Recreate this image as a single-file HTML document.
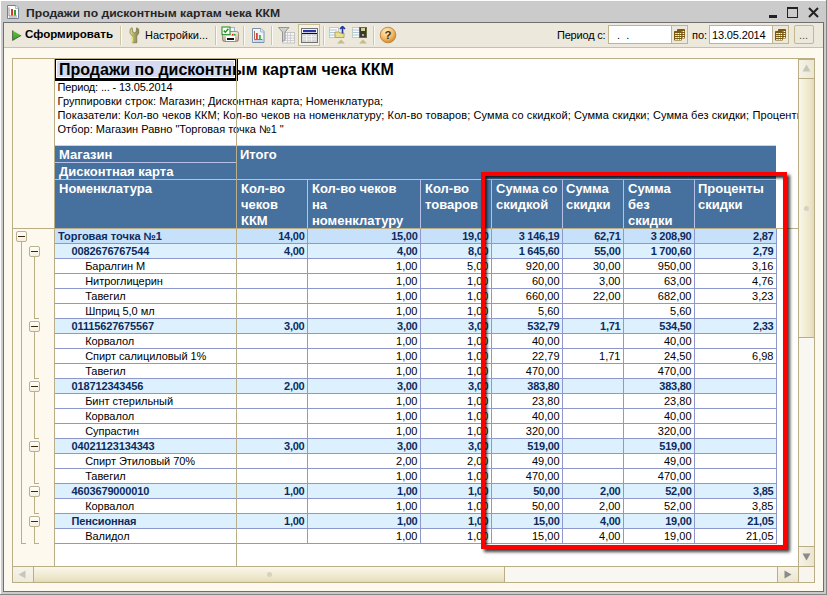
<!DOCTYPE html>
<html><head><meta charset="utf-8">
<style>
*{margin:0;padding:0;box-sizing:border-box}
html,body{width:827px;height:595px;overflow:hidden}
body{position:relative;background:#cbcbcb;font-family:"Liberation Sans",sans-serif;font-size:11px;color:#000}
.a{position:absolute}
.t{position:absolute;white-space:nowrap;line-height:13px}
.r{text-align:right}
.b{font-weight:bold}
</style></head><body>

<div class="a" style="left:0;top:0;width:827px;height:1px;background:#fcfcfc"></div>
<div class="a" style="left:0;top:0;width:1px;height:595px;background:#fcfcfc"></div>
<div class="a" style="left:0;top:594px;width:827px;height:1px;background:#858585"></div>
<div class="a" style="left:826px;top:0;width:1px;height:595px;background:#858585"></div>
<svg class="a" style="left:7px;top:5px" width="12" height="14" viewBox="0 0 12 14">
<path d="M0.5 0.5h8.5l2.5 2.5v10.5h-11z" fill="#fff" stroke="#6e8298"/><path d="M8.5 0.5v3h3" fill="#e4ecf4" stroke="#9aaabb" stroke-width="0.8"/>
<path d="M2 2.5v8.5h8" stroke="#8a6a6a" fill="none" stroke-width="0.8"/>
<rect x="4" y="4" width="2" height="6.5" fill="#e83020"/><rect x="7" y="5" width="2" height="5.5" fill="#30a030"/>
<rect x="2" y="12" width="8" height="1" fill="#b8cce0"/></svg>
<div class="t b" style="left:26px;top:7px;font-size:11px;transform:scaleX(1.104);transform-origin:0 0;color:#262626">Продажи по дисконтным картам чека ККМ</div>
<div class="a" style="left:769px;top:15px;width:8px;height:3px;background:#222"></div>
<div class="a" style="left:787px;top:7px;width:11px;height:11px;border:1px solid #222;border-top-width:2px"></div>
<svg class="a" style="left:808px;top:7px" width="11" height="11" viewBox="0 0 11 11"><path d="M1 1L10 10M10 1L1 10" stroke="#222" stroke-width="2"/></svg>
<div class="a" style="left:3px;top:22px;width:821px;height:570px;background:#6f6f6f"></div>
<div class="a" style="left:4px;top:23px;width:819px;height:568px;background:#fdf9ee"></div>
<div class="a" style="left:4px;top:23px;width:819px;height:25px;background:#ece8db;border-bottom:1px solid #c9c1a2"></div>
<svg class="a" style="left:12px;top:30px" width="10" height="11" viewBox="0 0 10 11"><defs><linearGradient id="plg" x1="0" y1="0" x2="0" y2="1"><stop offset="0" stop-color="#5cc83a"/><stop offset="1" stop-color="#3a9a22"/></linearGradient></defs><path d="M0.6 0.6L9.2 5.4L0.6 10.4z" fill="url(#plg)"/><path d="M0.6 0.4V10.4L9.2 5.4" stroke="#4a5a48" stroke-width="0.9" fill="none"/></svg>
<div class="t b" style="left:25px;top:28px;transform:scaleX(1.05);transform-origin:0 0;color:#000">Сформировать</div>
<div class="a" style="left:120px;top:26px;width:1px;height:19px;background:#cdc5a9"></div>
<div class="a" style="left:121px;top:26px;width:1px;height:19px;background:#fbfaf5"></div>
<div class="a" style="left:215px;top:26px;width:1px;height:19px;background:#cdc5a9"></div>
<div class="a" style="left:216px;top:26px;width:1px;height:19px;background:#fbfaf5"></div>
<div class="a" style="left:243px;top:26px;width:1px;height:19px;background:#cdc5a9"></div>
<div class="a" style="left:244px;top:26px;width:1px;height:19px;background:#fbfaf5"></div>
<div class="a" style="left:271px;top:26px;width:1px;height:19px;background:#cdc5a9"></div>
<div class="a" style="left:272px;top:26px;width:1px;height:19px;background:#fbfaf5"></div>
<div class="a" style="left:323px;top:26px;width:1px;height:19px;background:#cdc5a9"></div>
<div class="a" style="left:324px;top:26px;width:1px;height:19px;background:#fbfaf5"></div>
<div class="a" style="left:373px;top:26px;width:1px;height:19px;background:#cdc5a9"></div>
<div class="a" style="left:374px;top:26px;width:1px;height:19px;background:#fbfaf5"></div>
<svg class="a" style="left:129px;top:27px" width="11" height="17" viewBox="0 0 11 17">
<defs><linearGradient id="wg" x1="0" x2="1"><stop offset="0" stop-color="#e4e47a"/><stop offset="0.5" stop-color="#a8a468"/><stop offset="1" stop-color="#8a8656"/></linearGradient></defs>
<path d="M1.2 2 L3.2 0.8 L3.8 5 Q5.5 6.6 7.2 5 L7.6 0.8 L9.6 2 L9.8 6.2 L7.8 9 V15.8 H3.4 V9 L1 6.2 z" fill="url(#wg)" stroke="#6a6838" stroke-width="0.6"/>
<path d="M3.4 9.5V15.5" stroke="#e8e880" stroke-width="1"/></svg>
<div class="t" style="left:145px;top:29px;color:#000">Настройки...</div>
<svg class="a" style="left:221px;top:26px" width="19" height="17" viewBox="0 0 19 17">
<defs><linearGradient id="pg" x1="0" y1="0" x2="0" y2="1"><stop offset="0" stop-color="#f6eee6"/><stop offset="1" stop-color="#b8a290"/></linearGradient></defs>
<rect x="8.5" y="1.5" width="5" height="6" fill="#eef4fa" stroke="#9aaac0" stroke-width="0.8"/>
<rect x="1.5" y="5.5" width="16" height="10" rx="2" fill="url(#pg)" stroke="#8a7a6a" stroke-width="0.8"/>
<rect x="5" y="10" width="9" height="5" fill="#fff"/><rect x="6" y="12" width="7" height="2" fill="#111"/>
<rect x="11" y="8" width="1.5" height="1.5" fill="#e02020"/><rect x="13" y="8" width="1.5" height="1.5" fill="#20b020"/>
<rect x="1" y="1" width="8" height="7.5" fill="#fff" stroke="#3a9a3a" stroke-width="1.2"/><path d="M2.8 4.6l1.6 1.6 3-3.4" stroke="#229922" fill="none" stroke-width="1.6"/></svg>
<svg class="a" style="left:252px;top:28px" width="13" height="15" viewBox="0 0 13 15">
<path d="M0.5 0.5h8.5l3 3v11h-11.5z" fill="#f0f5fb" stroke="#7d8ea8"/><path d="M8.5 0.5v3.5h3.5" fill="#dde6f2" stroke="#9aaabb" stroke-width="0.8"/>
<path d="M2.5 3v8.5h8" stroke="#8a4a3a" fill="none" stroke-width="0.8"/>
<rect x="4" y="5" width="1.8" height="6" fill="#e84030"/><rect x="7" y="7" width="1.8" height="4" fill="#40b040"/>
<rect x="2" y="12.5" width="9" height="1" fill="#9cc0e0"/></svg>
<svg class="a" style="left:278px;top:27px" width="17" height="17" viewBox="0 0 17 17">
<rect x="4.5" y="5.5" width="12" height="10.5" fill="#f6f6f6" stroke="#c4c4c4"/><path d="M5 8.5h11M5 11h11M5 13.5h11M9.5 6v10M12.5 6v10" stroke="#c8c8c8" stroke-width="0.8"/>
<path d="M0.5 0.5h10.5l-4 4.5v8l-2.5 1.5v-9.5z" fill="#cfcfcf" stroke="#8c8c8c" stroke-width="0.9"/></svg>
<div class="a" style="left:298px;top:24px;width:22px;height:22px;background:#f5f2e8;border:1px solid #c6bc96"></div>
<svg class="a" style="left:301px;top:28px" width="17" height="15" viewBox="0 0 17 15">
<rect x="0.5" y="0.5" width="16" height="14" fill="#f4f4f4" stroke="#707070"/><rect x="2" y="2" width="13" height="2.2" fill="#2634a8"/>
<rect x="1" y="5" width="15" height="1" fill="#111"/><rect x="1" y="6" width="15" height="8" fill="#d6d6d6"/>
<path d="M1.5 8.5h14M1.5 11h14M5.5 6.5v7M10.5 6.5v7" stroke="#f4f4f4" stroke-width="0.9"/></svg>
<svg class="a" style="left:329px;top:26px" width="17" height="18" viewBox="0 0 17 18">
<rect x="0.5" y="1.5" width="9" height="10" fill="#fafafa" stroke="#c8c8c8"/><path d="M3 4h5M3 6.5h5M3 9h5" stroke="#b8c4d8"/><path d="M1.5 4h1M1.5 6.5h1M1.5 9h1" stroke="#30b0b0"/>
<path d="M6 6h4l1 1h4v4.5h-9z" fill="#e8e090" stroke="#a89848" stroke-width="0.8"/>
<path d="M13.5 0.5v7M11 3l2.5-2.5 2.5 2.5" stroke="#1a3aa0" fill="none" stroke-width="1.6"/>
<path d="M8 17.5l4-4 4 4z" fill="#c4bc88"/></svg>
<svg class="a" style="left:352px;top:26px" width="16" height="18" viewBox="0 0 16 18">
<rect x="0.5" y="1.5" width="9" height="10" fill="#fafafa" stroke="#c8c8c8"/><path d="M3 4h5M3 6.5h5M3 9h5" stroke="#b8c4d8"/><path d="M1.5 4h1M1.5 6.5h1M1.5 9h1" stroke="#30b0b0"/>
<rect x="7.5" y="1.5" width="7" height="10" fill="#3a3a2a" stroke="#6a6a40"/><rect x="9" y="2" width="4" height="3" fill="#d0d0a0"/><rect x="10" y="8" width="2" height="2" fill="#aaa"/>
<path d="M7 17.5l4-4 4 4z" fill="#c4bc88"/></svg>
<svg class="a" style="left:379px;top:26px" width="18" height="18" viewBox="0 0 18 18">
<defs><radialGradient id="hg" cx="0.4" cy="0.3" r="0.75"><stop offset="0" stop-color="#fff0c8"/><stop offset="0.6" stop-color="#f2b860"/><stop offset="1" stop-color="#d08028"/></radialGradient></defs>
<circle cx="9" cy="9" r="7.8" fill="url(#hg)" stroke="#b87a3a" stroke-width="0.8"/><text x="9" y="13.3" font-family="Liberation Sans" font-weight="bold" font-size="11.5" text-anchor="middle" fill="#4a3014">?</text></svg>
<div class="t" style="left:557px;top:29px;letter-spacing:-0.2px;color:#000">Период с:</div>
<div class="a" style="left:608px;top:25px;width:64px;height:19px;background:#fff;border:1px solid #bfb48c"></div>
<div class="t" style="left:617px;top:29px;color:#000">.&nbsp;&nbsp;.</div>
<div class="a" style="left:672px;top:25px;width:16px;height:19px;background:#ece8db;border:1px solid #bfb48c;border-left:none"></div>
<svg class="a" style="left:674px;top:29px" width="11" height="12" viewBox="0 0 11 12"><g transform="translate(3,0)"><rect x="0" y="0" width="8" height="9.5" rx="0.8" fill="#7a5a10"/><rect x="1.2" y="2" width="1.6" height="1" fill="#fff"/><rect x="1.2" y="4" width="1.6" height="1" fill="#fff"/><rect x="1.2" y="6" width="1.6" height="1" fill="#fff"/><rect x="1.2" y="8" width="1.6" height="1" fill="#fff"/><rect x="3.4" y="2" width="1.6" height="1" fill="#fff"/><rect x="3.4" y="4" width="1.6" height="1" fill="#fff"/><rect x="3.4" y="6" width="1.6" height="1" fill="#fff"/><rect x="3.4" y="8" width="1.6" height="1" fill="#fff"/><rect x="5.6" y="2" width="1.6" height="1" fill="#fff"/><rect x="5.6" y="4" width="1.6" height="1" fill="#fff"/><rect x="5.6" y="6" width="1.6" height="1" fill="#fff"/><rect x="5.6" y="8" width="1.6" height="1" fill="#fff"/></g><g transform="translate(0,2)"><rect x="0" y="0" width="8" height="9.5" rx="0.8" fill="#7a5a10"/><rect x="1.2" y="2" width="1.6" height="1" fill="#fff"/><rect x="1.2" y="4" width="1.6" height="1" fill="#fff"/><rect x="1.2" y="6" width="1.6" height="1" fill="#fff"/><rect x="1.2" y="8" width="1.6" height="1" fill="#fff"/><rect x="3.4" y="2" width="1.6" height="1" fill="#fff"/><rect x="3.4" y="4" width="1.6" height="1" fill="#fff"/><rect x="3.4" y="6" width="1.6" height="1" fill="#fff"/><rect x="3.4" y="8" width="1.6" height="1" fill="#fff"/><rect x="5.6" y="2" width="1.6" height="1" fill="#fff"/><rect x="5.6" y="4" width="1.6" height="1" fill="#fff"/><rect x="5.6" y="6" width="1.6" height="1" fill="#fff"/><rect x="5.6" y="8" width="1.6" height="1" fill="#fff"/></g></svg>
<div class="t" style="left:692px;top:29px;color:#000">по:</div>
<div class="a" style="left:709px;top:25px;width:64px;height:19px;background:#fff;border:1px solid #bfb48c"></div>
<div class="t" style="left:712px;top:29px;letter-spacing:-0.15px;color:#000">13.05.2014</div>
<div class="a" style="left:773px;top:25px;width:16px;height:19px;background:#ece8db;border:1px solid #bfb48c;border-left:none"></div>
<svg class="a" style="left:775px;top:29px" width="11" height="12" viewBox="0 0 11 12"><g transform="translate(3,0)"><rect x="0" y="0" width="8" height="9.5" rx="0.8" fill="#7a5a10"/><rect x="1.2" y="2" width="1.6" height="1" fill="#fff"/><rect x="1.2" y="4" width="1.6" height="1" fill="#fff"/><rect x="1.2" y="6" width="1.6" height="1" fill="#fff"/><rect x="1.2" y="8" width="1.6" height="1" fill="#fff"/><rect x="3.4" y="2" width="1.6" height="1" fill="#fff"/><rect x="3.4" y="4" width="1.6" height="1" fill="#fff"/><rect x="3.4" y="6" width="1.6" height="1" fill="#fff"/><rect x="3.4" y="8" width="1.6" height="1" fill="#fff"/><rect x="5.6" y="2" width="1.6" height="1" fill="#fff"/><rect x="5.6" y="4" width="1.6" height="1" fill="#fff"/><rect x="5.6" y="6" width="1.6" height="1" fill="#fff"/><rect x="5.6" y="8" width="1.6" height="1" fill="#fff"/></g><g transform="translate(0,2)"><rect x="0" y="0" width="8" height="9.5" rx="0.8" fill="#7a5a10"/><rect x="1.2" y="2" width="1.6" height="1" fill="#fff"/><rect x="1.2" y="4" width="1.6" height="1" fill="#fff"/><rect x="1.2" y="6" width="1.6" height="1" fill="#fff"/><rect x="1.2" y="8" width="1.6" height="1" fill="#fff"/><rect x="3.4" y="2" width="1.6" height="1" fill="#fff"/><rect x="3.4" y="4" width="1.6" height="1" fill="#fff"/><rect x="3.4" y="6" width="1.6" height="1" fill="#fff"/><rect x="3.4" y="8" width="1.6" height="1" fill="#fff"/><rect x="5.6" y="2" width="1.6" height="1" fill="#fff"/><rect x="5.6" y="4" width="1.6" height="1" fill="#fff"/><rect x="5.6" y="6" width="1.6" height="1" fill="#fff"/><rect x="5.6" y="8" width="1.6" height="1" fill="#fff"/></g></svg>
<div class="a" style="left:794px;top:25px;width:20px;height:19px;background:#ece8db;border:1px solid #c2b88e;border-radius:2px"></div>
<div class="t" style="left:799px;top:29px;color:#555">...</div>
<div class="a" style="left:12px;top:58px;width:803px;height:525px;border:1px solid #b9ae86;background:#fff"></div>
<div class="a" style="left:13px;top:59px;width:41px;height:507px;background:#fdf9ef"></div>
<div class="a" style="left:54px;top:59px;width:1px;height:507px;background:#b9ae86"></div>
<div class="a" style="left:55px;top:59px;width:183px;height:22px;border:1px solid #000;border-right-width:3px;border-bottom-width:3px;background:#d3daf2;box-shadow:inset 1px 1px 0 #fff,inset -1px -1px 0 #fff"></div>
<div class="t b" style="left:59px;top:61px;font-size:16px;letter-spacing:0px;line-height:18px">Продажи по дисконтным картам чека ККМ</div>
<div class="t" style="left:57.5px;top:81px;width:740.5px;overflow:hidden;letter-spacing:-0.16px">Период: ... - 13.05.2014</div>
<div class="t" style="left:57.5px;top:95px;width:740.5px;overflow:hidden;letter-spacing:0.05px">Группировки строк: Магазин; Дисконтная карта; Номенклатура;</div>
<div class="t" style="left:57.5px;top:109px;width:740.5px;overflow:hidden;letter-spacing:0.1px">Показатели: Кол-во чеков ККМ; Кол-во чеков на номенклатуру; Кол-во товаров; Сумма со скидкой; Сумма скидки; Сумма без скидки; Проценты скидки</div>
<div class="t" style="left:57.5px;top:123px;width:740.5px;overflow:hidden;letter-spacing:0px">Отбор: Магазин Равно "Торговая точка №1 "</div>
<div class="a" style="left:55px;top:145px;width:721px;height:83px;background:#46709d;border-top:1px solid #c8d0ee"></div>
<div class="a" style="left:55px;top:162px;width:181px;height:1px;background:#b8c0e8"></div>
<div class="a" style="left:55px;top:179px;width:721px;height:1px;background:#b8c0e8"></div>
<div class="a" style="left:307px;top:180px;width:1px;height:48px;background:#b8c0e8"></div>
<div class="a" style="left:420px;top:180px;width:1px;height:48px;background:#b8c0e8"></div>
<div class="a" style="left:491px;top:180px;width:1px;height:48px;background:#b8c0e8"></div>
<div class="a" style="left:562px;top:180px;width:1px;height:48px;background:#b8c0e8"></div>
<div class="a" style="left:623px;top:180px;width:1px;height:48px;background:#b8c0e8"></div>
<div class="a" style="left:694px;top:180px;width:1px;height:48px;background:#b8c0e8"></div>
<div class="t b" style="left:59px;top:147px;font-size:13px;line-height:16px;color:#fff">Магазин</div>
<div class="t b" style="left:59px;top:164px;font-size:13px;line-height:16px;color:#fff">Дисконтная карта</div>
<div class="t b" style="left:59px;top:181px;font-size:13px;line-height:16px;color:#fff">Номенклатура</div>
<div class="t b" style="left:240px;top:147px;font-size:13px;line-height:16px;color:#fff">Итого</div>
<div class="t b" style="left:241px;top:181px;font-size:13px;line-height:16px;color:#fff">Кол-во<br>чеков<br>ККМ</div>
<div class="t b" style="left:312px;top:181px;font-size:13px;line-height:16px;color:#fff">Кол-во чеков<br>на<br>номенклатуру</div>
<div class="t b" style="left:425px;top:181px;font-size:13px;line-height:16px;color:#fff">Кол-во<br>товаров</div>
<div class="t b" style="left:496px;top:181px;font-size:13px;line-height:16px;color:#fff">Сумма со<br>скидкой</div>
<div class="t b" style="left:566px;top:181px;font-size:13px;line-height:16px;color:#fff">Сумма<br>скидки</div>
<div class="t b" style="left:628px;top:181px;font-size:13px;line-height:16px;color:#fff">Сумма<br>без<br>скидки</div>
<div class="t b" style="left:698px;top:181px;font-size:13px;line-height:16px;color:#fff">Проценты<br>скидки</div>
<div class="a" style="left:55px;top:229px;width:721px;height:14px;background:#c7e1fa"></div>
<div class="a" style="left:55px;top:243px;width:722px;height:1px;background:#8e98cc"></div>
<div class="t b" style="left:58.0px;top:230px;letter-spacing:0px;color:#0d2b5e">Торговая точка №1</div>
<div class="t b r" style="left:236px;width:68.5px;top:230px;letter-spacing:-0.25px;color:#0d2b5e">14,00</div>
<div class="t b r" style="left:307px;width:110.5px;top:230px;letter-spacing:-0.25px;color:#0d2b5e">15,00</div>
<div class="t b r" style="left:420px;width:68.5px;top:230px;letter-spacing:-0.25px;color:#0d2b5e">19,00</div>
<div class="t b r" style="left:491px;width:68.5px;top:230px;letter-spacing:-0.25px;color:#0d2b5e">3 146,19</div>
<div class="t b r" style="left:562px;width:58.5px;top:230px;letter-spacing:-0.25px;color:#0d2b5e">62,71</div>
<div class="t b r" style="left:623px;width:68.5px;top:230px;letter-spacing:-0.25px;color:#0d2b5e">3 208,90</div>
<div class="t b r" style="left:694px;width:79.5px;top:230px;letter-spacing:-0.25px;color:#0d2b5e">2,87</div>
<div class="a" style="left:55px;top:244px;width:721px;height:14px;background:#dcf0fd"></div>
<div class="a" style="left:55px;top:258px;width:722px;height:1px;background:#8e98cc"></div>
<div class="t b" style="left:71.6px;top:245px;letter-spacing:-0.15px;color:#0d2b5e">0082676767544</div>
<div class="t b r" style="left:236px;width:68.5px;top:245px;letter-spacing:-0.25px;color:#0d2b5e">4,00</div>
<div class="t b r" style="left:307px;width:110.5px;top:245px;letter-spacing:-0.25px;color:#0d2b5e">4,00</div>
<div class="t b r" style="left:420px;width:68.5px;top:245px;letter-spacing:-0.25px;color:#0d2b5e">8,00</div>
<div class="t b r" style="left:491px;width:68.5px;top:245px;letter-spacing:-0.25px;color:#0d2b5e">1 645,60</div>
<div class="t b r" style="left:562px;width:58.5px;top:245px;letter-spacing:-0.25px;color:#0d2b5e">55,00</div>
<div class="t b r" style="left:623px;width:68.5px;top:245px;letter-spacing:-0.25px;color:#0d2b5e">1 700,60</div>
<div class="t b r" style="left:694px;width:79.5px;top:245px;letter-spacing:-0.25px;color:#0d2b5e">2,79</div>
<div class="a" style="left:55px;top:259px;width:721px;height:14px;background:#ffffff"></div>
<div class="a" style="left:55px;top:273px;width:722px;height:1px;background:#8e98cc"></div>
<div class="t" style="left:85.2px;top:260px;letter-spacing:-0.05px;color:#000">Баралгин М</div>
<div class="t r" style="left:307px;width:110.5px;top:260px;color:#000">1,00</div>
<div class="t r" style="left:420px;width:68.5px;top:260px;color:#000">5,00</div>
<div class="t r" style="left:491px;width:68.5px;top:260px;color:#000">920,00</div>
<div class="t r" style="left:562px;width:58.5px;top:260px;color:#000">30,00</div>
<div class="t r" style="left:623px;width:68.5px;top:260px;color:#000">950,00</div>
<div class="t r" style="left:694px;width:79.5px;top:260px;color:#000">3,16</div>
<div class="a" style="left:55px;top:274px;width:721px;height:14px;background:#ffffff"></div>
<div class="a" style="left:55px;top:288px;width:722px;height:1px;background:#8e98cc"></div>
<div class="t" style="left:85.2px;top:275px;letter-spacing:-0.05px;color:#000">Нитроглицерин</div>
<div class="t r" style="left:307px;width:110.5px;top:275px;color:#000">1,00</div>
<div class="t r" style="left:420px;width:68.5px;top:275px;color:#000">1,00</div>
<div class="t r" style="left:491px;width:68.5px;top:275px;color:#000">60,00</div>
<div class="t r" style="left:562px;width:58.5px;top:275px;color:#000">3,00</div>
<div class="t r" style="left:623px;width:68.5px;top:275px;color:#000">63,00</div>
<div class="t r" style="left:694px;width:79.5px;top:275px;color:#000">4,76</div>
<div class="a" style="left:55px;top:289px;width:721px;height:14px;background:#ffffff"></div>
<div class="a" style="left:55px;top:303px;width:722px;height:1px;background:#8e98cc"></div>
<div class="t" style="left:85.2px;top:290px;letter-spacing:-0.05px;color:#000">Тавегил</div>
<div class="t r" style="left:307px;width:110.5px;top:290px;color:#000">1,00</div>
<div class="t r" style="left:420px;width:68.5px;top:290px;color:#000">1,00</div>
<div class="t r" style="left:491px;width:68.5px;top:290px;color:#000">660,00</div>
<div class="t r" style="left:562px;width:58.5px;top:290px;color:#000">22,00</div>
<div class="t r" style="left:623px;width:68.5px;top:290px;color:#000">682,00</div>
<div class="t r" style="left:694px;width:79.5px;top:290px;color:#000">3,23</div>
<div class="a" style="left:55px;top:304px;width:721px;height:14px;background:#ffffff"></div>
<div class="a" style="left:55px;top:318px;width:722px;height:1px;background:#8e98cc"></div>
<div class="t" style="left:85.2px;top:305px;letter-spacing:-0.05px;color:#000">Шприц 5,0 мл</div>
<div class="t r" style="left:307px;width:110.5px;top:305px;color:#000">1,00</div>
<div class="t r" style="left:420px;width:68.5px;top:305px;color:#000">1,00</div>
<div class="t r" style="left:491px;width:68.5px;top:305px;color:#000">5,60</div>
<div class="t r" style="left:623px;width:68.5px;top:305px;color:#000">5,60</div>
<div class="a" style="left:55px;top:319px;width:721px;height:14px;background:#dcf0fd"></div>
<div class="a" style="left:55px;top:333px;width:722px;height:1px;background:#8e98cc"></div>
<div class="t b" style="left:71.6px;top:320px;letter-spacing:-0.15px;color:#0d2b5e">01115627675567</div>
<div class="t b r" style="left:236px;width:68.5px;top:320px;letter-spacing:-0.25px;color:#0d2b5e">3,00</div>
<div class="t b r" style="left:307px;width:110.5px;top:320px;letter-spacing:-0.25px;color:#0d2b5e">3,00</div>
<div class="t b r" style="left:420px;width:68.5px;top:320px;letter-spacing:-0.25px;color:#0d2b5e">3,00</div>
<div class="t b r" style="left:491px;width:68.5px;top:320px;letter-spacing:-0.25px;color:#0d2b5e">532,79</div>
<div class="t b r" style="left:562px;width:58.5px;top:320px;letter-spacing:-0.25px;color:#0d2b5e">1,71</div>
<div class="t b r" style="left:623px;width:68.5px;top:320px;letter-spacing:-0.25px;color:#0d2b5e">534,50</div>
<div class="t b r" style="left:694px;width:79.5px;top:320px;letter-spacing:-0.25px;color:#0d2b5e">2,33</div>
<div class="a" style="left:55px;top:334px;width:721px;height:14px;background:#ffffff"></div>
<div class="a" style="left:55px;top:348px;width:722px;height:1px;background:#8e98cc"></div>
<div class="t" style="left:85.2px;top:335px;letter-spacing:-0.05px;color:#000">Корвалол</div>
<div class="t r" style="left:307px;width:110.5px;top:335px;color:#000">1,00</div>
<div class="t r" style="left:420px;width:68.5px;top:335px;color:#000">1,00</div>
<div class="t r" style="left:491px;width:68.5px;top:335px;color:#000">40,00</div>
<div class="t r" style="left:623px;width:68.5px;top:335px;color:#000">40,00</div>
<div class="a" style="left:55px;top:349px;width:721px;height:14px;background:#ffffff"></div>
<div class="a" style="left:55px;top:363px;width:722px;height:1px;background:#8e98cc"></div>
<div class="t" style="left:85.2px;top:350px;letter-spacing:-0.05px;color:#000">Спирт салициловый 1%</div>
<div class="t r" style="left:307px;width:110.5px;top:350px;color:#000">1,00</div>
<div class="t r" style="left:420px;width:68.5px;top:350px;color:#000">1,00</div>
<div class="t r" style="left:491px;width:68.5px;top:350px;color:#000">22,79</div>
<div class="t r" style="left:562px;width:58.5px;top:350px;color:#000">1,71</div>
<div class="t r" style="left:623px;width:68.5px;top:350px;color:#000">24,50</div>
<div class="t r" style="left:694px;width:79.5px;top:350px;color:#000">6,98</div>
<div class="a" style="left:55px;top:364px;width:721px;height:14px;background:#ffffff"></div>
<div class="a" style="left:55px;top:378px;width:722px;height:1px;background:#8e98cc"></div>
<div class="t" style="left:85.2px;top:365px;letter-spacing:-0.05px;color:#000">Тавегил</div>
<div class="t r" style="left:307px;width:110.5px;top:365px;color:#000">1,00</div>
<div class="t r" style="left:420px;width:68.5px;top:365px;color:#000">1,00</div>
<div class="t r" style="left:491px;width:68.5px;top:365px;color:#000">470,00</div>
<div class="t r" style="left:623px;width:68.5px;top:365px;color:#000">470,00</div>
<div class="a" style="left:55px;top:379px;width:721px;height:14px;background:#dcf0fd"></div>
<div class="a" style="left:55px;top:393px;width:722px;height:1px;background:#8e98cc"></div>
<div class="t b" style="left:71.6px;top:380px;letter-spacing:-0.15px;color:#0d2b5e">018712343456</div>
<div class="t b r" style="left:236px;width:68.5px;top:380px;letter-spacing:-0.25px;color:#0d2b5e">2,00</div>
<div class="t b r" style="left:307px;width:110.5px;top:380px;letter-spacing:-0.25px;color:#0d2b5e">3,00</div>
<div class="t b r" style="left:420px;width:68.5px;top:380px;letter-spacing:-0.25px;color:#0d2b5e">3,00</div>
<div class="t b r" style="left:491px;width:68.5px;top:380px;letter-spacing:-0.25px;color:#0d2b5e">383,80</div>
<div class="t b r" style="left:623px;width:68.5px;top:380px;letter-spacing:-0.25px;color:#0d2b5e">383,80</div>
<div class="a" style="left:55px;top:394px;width:721px;height:14px;background:#ffffff"></div>
<div class="a" style="left:55px;top:408px;width:722px;height:1px;background:#8e98cc"></div>
<div class="t" style="left:85.2px;top:395px;letter-spacing:-0.05px;color:#000">Бинт стерильный</div>
<div class="t r" style="left:307px;width:110.5px;top:395px;color:#000">1,00</div>
<div class="t r" style="left:420px;width:68.5px;top:395px;color:#000">1,00</div>
<div class="t r" style="left:491px;width:68.5px;top:395px;color:#000">23,80</div>
<div class="t r" style="left:623px;width:68.5px;top:395px;color:#000">23,80</div>
<div class="a" style="left:55px;top:409px;width:721px;height:14px;background:#ffffff"></div>
<div class="a" style="left:55px;top:423px;width:722px;height:1px;background:#8e98cc"></div>
<div class="t" style="left:85.2px;top:410px;letter-spacing:-0.05px;color:#000">Корвалол</div>
<div class="t r" style="left:307px;width:110.5px;top:410px;color:#000">1,00</div>
<div class="t r" style="left:420px;width:68.5px;top:410px;color:#000">1,00</div>
<div class="t r" style="left:491px;width:68.5px;top:410px;color:#000">40,00</div>
<div class="t r" style="left:623px;width:68.5px;top:410px;color:#000">40,00</div>
<div class="a" style="left:55px;top:424px;width:721px;height:14px;background:#ffffff"></div>
<div class="a" style="left:55px;top:438px;width:722px;height:1px;background:#8e98cc"></div>
<div class="t" style="left:85.2px;top:425px;letter-spacing:-0.05px;color:#000">Супрастин</div>
<div class="t r" style="left:307px;width:110.5px;top:425px;color:#000">1,00</div>
<div class="t r" style="left:420px;width:68.5px;top:425px;color:#000">1,00</div>
<div class="t r" style="left:491px;width:68.5px;top:425px;color:#000">320,00</div>
<div class="t r" style="left:623px;width:68.5px;top:425px;color:#000">320,00</div>
<div class="a" style="left:55px;top:439px;width:721px;height:14px;background:#dcf0fd"></div>
<div class="a" style="left:55px;top:453px;width:722px;height:1px;background:#8e98cc"></div>
<div class="t b" style="left:71.6px;top:440px;letter-spacing:-0.15px;color:#0d2b5e">04021123134343</div>
<div class="t b r" style="left:236px;width:68.5px;top:440px;letter-spacing:-0.25px;color:#0d2b5e">3,00</div>
<div class="t b r" style="left:307px;width:110.5px;top:440px;letter-spacing:-0.25px;color:#0d2b5e">3,00</div>
<div class="t b r" style="left:420px;width:68.5px;top:440px;letter-spacing:-0.25px;color:#0d2b5e">3,00</div>
<div class="t b r" style="left:491px;width:68.5px;top:440px;letter-spacing:-0.25px;color:#0d2b5e">519,00</div>
<div class="t b r" style="left:623px;width:68.5px;top:440px;letter-spacing:-0.25px;color:#0d2b5e">519,00</div>
<div class="a" style="left:55px;top:454px;width:721px;height:14px;background:#ffffff"></div>
<div class="a" style="left:55px;top:468px;width:722px;height:1px;background:#8e98cc"></div>
<div class="t" style="left:85.2px;top:455px;letter-spacing:-0.05px;color:#000">Спирт Этиловый 70%</div>
<div class="t r" style="left:307px;width:110.5px;top:455px;color:#000">2,00</div>
<div class="t r" style="left:420px;width:68.5px;top:455px;color:#000">2,00</div>
<div class="t r" style="left:491px;width:68.5px;top:455px;color:#000">49,00</div>
<div class="t r" style="left:623px;width:68.5px;top:455px;color:#000">49,00</div>
<div class="a" style="left:55px;top:469px;width:721px;height:14px;background:#ffffff"></div>
<div class="a" style="left:55px;top:483px;width:722px;height:1px;background:#8e98cc"></div>
<div class="t" style="left:85.2px;top:470px;letter-spacing:-0.05px;color:#000">Тавегил</div>
<div class="t r" style="left:307px;width:110.5px;top:470px;color:#000">1,00</div>
<div class="t r" style="left:420px;width:68.5px;top:470px;color:#000">1,00</div>
<div class="t r" style="left:491px;width:68.5px;top:470px;color:#000">470,00</div>
<div class="t r" style="left:623px;width:68.5px;top:470px;color:#000">470,00</div>
<div class="a" style="left:55px;top:484px;width:721px;height:14px;background:#dcf0fd"></div>
<div class="a" style="left:55px;top:498px;width:722px;height:1px;background:#8e98cc"></div>
<div class="t b" style="left:71.6px;top:485px;letter-spacing:-0.15px;color:#0d2b5e">4603679000010</div>
<div class="t b r" style="left:236px;width:68.5px;top:485px;letter-spacing:-0.25px;color:#0d2b5e">1,00</div>
<div class="t b r" style="left:307px;width:110.5px;top:485px;letter-spacing:-0.25px;color:#0d2b5e">1,00</div>
<div class="t b r" style="left:420px;width:68.5px;top:485px;letter-spacing:-0.25px;color:#0d2b5e">1,00</div>
<div class="t b r" style="left:491px;width:68.5px;top:485px;letter-spacing:-0.25px;color:#0d2b5e">50,00</div>
<div class="t b r" style="left:562px;width:58.5px;top:485px;letter-spacing:-0.25px;color:#0d2b5e">2,00</div>
<div class="t b r" style="left:623px;width:68.5px;top:485px;letter-spacing:-0.25px;color:#0d2b5e">52,00</div>
<div class="t b r" style="left:694px;width:79.5px;top:485px;letter-spacing:-0.25px;color:#0d2b5e">3,85</div>
<div class="a" style="left:55px;top:499px;width:721px;height:14px;background:#ffffff"></div>
<div class="a" style="left:55px;top:513px;width:722px;height:1px;background:#8e98cc"></div>
<div class="t" style="left:85.2px;top:500px;letter-spacing:-0.05px;color:#000">Корвалол</div>
<div class="t r" style="left:307px;width:110.5px;top:500px;color:#000">1,00</div>
<div class="t r" style="left:420px;width:68.5px;top:500px;color:#000">1,00</div>
<div class="t r" style="left:491px;width:68.5px;top:500px;color:#000">50,00</div>
<div class="t r" style="left:562px;width:58.5px;top:500px;color:#000">2,00</div>
<div class="t r" style="left:623px;width:68.5px;top:500px;color:#000">52,00</div>
<div class="t r" style="left:694px;width:79.5px;top:500px;color:#000">3,85</div>
<div class="a" style="left:55px;top:514px;width:721px;height:14px;background:#dcf0fd"></div>
<div class="a" style="left:55px;top:528px;width:722px;height:1px;background:#8e98cc"></div>
<div class="t b" style="left:71.6px;top:515px;letter-spacing:-0.15px;color:#0d2b5e">Пенсионная</div>
<div class="t b r" style="left:236px;width:68.5px;top:515px;letter-spacing:-0.25px;color:#0d2b5e">1,00</div>
<div class="t b r" style="left:307px;width:110.5px;top:515px;letter-spacing:-0.25px;color:#0d2b5e">1,00</div>
<div class="t b r" style="left:420px;width:68.5px;top:515px;letter-spacing:-0.25px;color:#0d2b5e">1,00</div>
<div class="t b r" style="left:491px;width:68.5px;top:515px;letter-spacing:-0.25px;color:#0d2b5e">15,00</div>
<div class="t b r" style="left:562px;width:58.5px;top:515px;letter-spacing:-0.25px;color:#0d2b5e">4,00</div>
<div class="t b r" style="left:623px;width:68.5px;top:515px;letter-spacing:-0.25px;color:#0d2b5e">19,00</div>
<div class="t b r" style="left:694px;width:79.5px;top:515px;letter-spacing:-0.25px;color:#0d2b5e">21,05</div>
<div class="a" style="left:55px;top:529px;width:721px;height:14px;background:#ffffff"></div>
<div class="a" style="left:55px;top:543px;width:722px;height:1px;background:#8e98cc"></div>
<div class="t" style="left:85.2px;top:530px;letter-spacing:-0.05px;color:#000">Валидол</div>
<div class="t r" style="left:307px;width:110.5px;top:530px;color:#000">1,00</div>
<div class="t r" style="left:420px;width:68.5px;top:530px;color:#000">1,00</div>
<div class="t r" style="left:491px;width:68.5px;top:530px;color:#000">15,00</div>
<div class="t r" style="left:562px;width:58.5px;top:530px;color:#000">4,00</div>
<div class="t r" style="left:623px;width:68.5px;top:530px;color:#000">19,00</div>
<div class="t r" style="left:694px;width:79.5px;top:530px;color:#000">21,05</div>
<div class="a" style="left:307px;top:229px;width:1px;height:315px;background:#8e98cc"></div>
<div class="a" style="left:420px;top:229px;width:1px;height:315px;background:#8e98cc"></div>
<div class="a" style="left:491px;top:229px;width:1px;height:315px;background:#8e98cc"></div>
<div class="a" style="left:562px;top:229px;width:1px;height:315px;background:#8e98cc"></div>
<div class="a" style="left:623px;top:229px;width:1px;height:315px;background:#8e98cc"></div>
<div class="a" style="left:694px;top:229px;width:1px;height:315px;background:#8e98cc"></div>
<div class="a" style="left:776px;top:229px;width:1px;height:315px;background:#8e98cc"></div>
<div class="a" style="left:13px;top:228px;width:785px;height:1px;background:#b9ae86"></div>
<div class="a" style="left:236px;top:59px;width:1px;height:507px;background:#b9ae86"></div>
<div class="a" style="left:16px;top:231px;width:11px;height:11px;border:1px solid #bcb08c;border-radius:2px;background:linear-gradient(180deg,#fffefa,#f4efe0)"></div>
<div class="a" style="left:18px;top:236px;width:7px;height:1px;background:#3a2a0a"></div>
<div class="a" style="left:21px;top:242px;width:1px;height:301px;background:#b9ae86"></div>
<div class="a" style="left:21px;top:543px;width:5px;height:1px;background:#b9ae86"></div>
<div class="a" style="left:29px;top:246px;width:11px;height:11px;border:1px solid #bcb08c;border-radius:2px;background:linear-gradient(180deg,#fffefa,#f4efe0)"></div>
<div class="a" style="left:31px;top:251px;width:7px;height:1px;background:#3a2a0a"></div>
<div class="a" style="left:34px;top:257px;width:1px;height:61px;background:#b9ae86"></div>
<div class="a" style="left:34px;top:318px;width:5px;height:1px;background:#b9ae86"></div>
<div class="a" style="left:29px;top:321px;width:11px;height:11px;border:1px solid #bcb08c;border-radius:2px;background:linear-gradient(180deg,#fffefa,#f4efe0)"></div>
<div class="a" style="left:31px;top:326px;width:7px;height:1px;background:#3a2a0a"></div>
<div class="a" style="left:34px;top:332px;width:1px;height:46px;background:#b9ae86"></div>
<div class="a" style="left:34px;top:378px;width:5px;height:1px;background:#b9ae86"></div>
<div class="a" style="left:29px;top:381px;width:11px;height:11px;border:1px solid #bcb08c;border-radius:2px;background:linear-gradient(180deg,#fffefa,#f4efe0)"></div>
<div class="a" style="left:31px;top:386px;width:7px;height:1px;background:#3a2a0a"></div>
<div class="a" style="left:34px;top:392px;width:1px;height:46px;background:#b9ae86"></div>
<div class="a" style="left:34px;top:438px;width:5px;height:1px;background:#b9ae86"></div>
<div class="a" style="left:29px;top:441px;width:11px;height:11px;border:1px solid #bcb08c;border-radius:2px;background:linear-gradient(180deg,#fffefa,#f4efe0)"></div>
<div class="a" style="left:31px;top:446px;width:7px;height:1px;background:#3a2a0a"></div>
<div class="a" style="left:34px;top:452px;width:1px;height:31px;background:#b9ae86"></div>
<div class="a" style="left:34px;top:483px;width:5px;height:1px;background:#b9ae86"></div>
<div class="a" style="left:29px;top:486px;width:11px;height:11px;border:1px solid #bcb08c;border-radius:2px;background:linear-gradient(180deg,#fffefa,#f4efe0)"></div>
<div class="a" style="left:31px;top:491px;width:7px;height:1px;background:#3a2a0a"></div>
<div class="a" style="left:34px;top:497px;width:1px;height:16px;background:#b9ae86"></div>
<div class="a" style="left:34px;top:513px;width:5px;height:1px;background:#b9ae86"></div>
<div class="a" style="left:29px;top:516px;width:11px;height:11px;border:1px solid #bcb08c;border-radius:2px;background:linear-gradient(180deg,#fffefa,#f4efe0)"></div>
<div class="a" style="left:31px;top:521px;width:7px;height:1px;background:#3a2a0a"></div>
<div class="a" style="left:34px;top:527px;width:1px;height:16px;background:#b9ae86"></div>
<div class="a" style="left:34px;top:543px;width:5px;height:1px;background:#b9ae86"></div>
<div class="a" style="left:481px;top:172px;width:306px;height:377px;border:4px solid #f00;box-shadow:3px 3px 3px rgba(0,0,0,0.75), inset 2px 2px 3px rgba(0,0,0,0.8)"></div>
<div class="a" style="left:798px;top:59px;width:16px;height:507px;background:#f8f7f2;border-left:1px solid #b9ae86"></div>
<div class="a" style="left:798px;top:59px;width:16px;height:20px;background:linear-gradient(90deg,#f6f3e6,#ebe6d0);border:1px solid #b9ae86;border-right:none"></div>
<svg class="a" style="left:802px;top:64px" width="9" height="8"><path d="M0.5 7.5L4.5 0.5L8.5 7.5z" fill="#c8c6bc"/></svg>
<div class="a" style="left:798px;top:79px;width:16px;height:259px;background:linear-gradient(90deg,#faf7ea,#ede6c8 70%,#e2dbbb);border:1px solid #b9ae86;border-right:none;border-top:none"></div>
<div class="a" style="left:804px;top:206px;width:5px;height:5px;border-radius:3px;background:#d6d2c2"></div>
<div class="a" style="left:798px;top:546px;width:16px;height:20px;background:linear-gradient(90deg,#f6f3e6,#ebe6d0);border:1px solid #b9ae86;border-right:none;border-bottom:none"></div>
<svg class="a" style="left:802px;top:553px" width="9" height="8"><path d="M0.5 0.5L4.5 7.5L8.5 0.5z" fill="#8a8a8a"/></svg>
<div class="a" style="left:13px;top:566px;width:785px;height:16px;background:#f8f7f2;border-top:1px solid #b9ae86"></div>
<div class="a" style="left:33px;top:566px;width:472px;height:16px;background:linear-gradient(180deg,#f9f7ec,#ede6c8 70%,#e2dbbb);border-top:1px solid #b9ae86;border-right:1px solid #b9ae86"></div>
<div class="a" style="left:267px;top:572px;width:5px;height:5px;border-radius:3px;background:#d6d2c2"></div>
<div class="a" style="left:13px;top:566px;width:21px;height:16px;background:linear-gradient(180deg,#f6f4ea,#eeeadb);border-top:1px solid #b9ae86;border-right:1px solid #b9ae86"></div>
<svg class="a" style="left:18px;top:570px" width="8" height="9"><path d="M7.5 0.5L0.5 4.5L7.5 8.5z" fill="#c8c6bc"/></svg>
<div class="a" style="left:777px;top:566px;width:21px;height:16px;background:linear-gradient(180deg,#f6f3e6,#ebe6d0);border-top:1px solid #b9ae86;border-left:1px solid #b9ae86"></div>
<svg class="a" style="left:784px;top:570px" width="8" height="9"><path d="M0.5 0.5L7.5 4.5L0.5 8.5z" fill="#8a8a8a"/></svg>
<div class="a" style="left:798px;top:566px;width:16px;height:16px;background:#f7f5ee;border-top:1px solid #b9ae86;border-left:1px solid #b9ae86"></div>
</body></html>
